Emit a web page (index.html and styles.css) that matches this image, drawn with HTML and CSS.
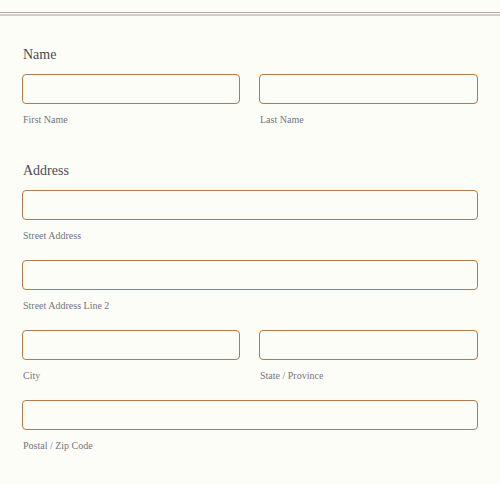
FILE: index.html
```html
<!DOCTYPE html>
<html>
<head>
<meta charset="utf-8">
<link rel="stylesheet" href="styles.css">
</head>
<body>
<div class="topbar"></div>
<form class="form">
  <section class="group">
    <div class="group-label">Name</div>
    <div class="row two">
      <div class="field"><input class="input" type="text"><div class="sub">First Name</div></div>
      <div class="field"><input class="input" type="text"><div class="sub">Last Name</div></div>
    </div>
  </section>
  <section class="group address">
    <div class="group-label">Address</div>
    <div class="row"><div class="field"><input class="input" type="text"><div class="sub">Street Address</div></div></div>
    <div class="row"><div class="field"><input class="input" type="text"><div class="sub">Street Address Line 2</div></div></div>
    <div class="row two">
      <div class="field"><input class="input" type="text"><div class="sub">City</div></div>
      <div class="field"><input class="input" type="text"><div class="sub">State / Province</div></div>
    </div>
    <div class="row"><div class="field"><input class="input" type="text"><div class="sub">Postal / Zip Code</div></div></div>
  </section>
</form>
</body>
</html>
```
FILE: styles.css
```css
html, body {
  margin: 0;
  padding: 0;
  background: #fdfdf8;
  font-family: "Liberation Serif", "Times New Roman", serif;
}
.topbar {
  margin-top: 12px;
  height: 1px;
  border-top: 1px solid #a9a9a9;
  border-bottom: 2px solid #d6cec5;
}
.form {
  padding: 29px 22px 0 22px;
  margin: 0;
}
.group-label {
  font-size: 14px;
  line-height: 20px;
  color: #4b4b55;
  padding-left: 1px;
  margin-bottom: 9px;
}
.address {
  margin-top: 35px;
}
.row {
  display: grid;
  grid-template-columns: 1fr;
  margin-bottom: 18px;
}
.row.two {
  grid-template-columns: 218px 1fr;
  column-gap: 19px;
}
.field {
  display: flex;
  flex-direction: column;
}
.input {
  box-sizing: border-box;
  height: 30px;
  width: 100%;
  margin: 0;
  border: 1.5px solid #b27a48;
  border-radius: 4px;
  background: #fdfdf8;
  outline: none;
}
.sub {
  margin-top: 9px;
  margin-bottom: -1px;
  font-size: 10px;
  line-height: 14px;
  color: #74747c;
  padding-left: 1px;
}
.group:first-child .row {
  margin-bottom: 0;
}
```
